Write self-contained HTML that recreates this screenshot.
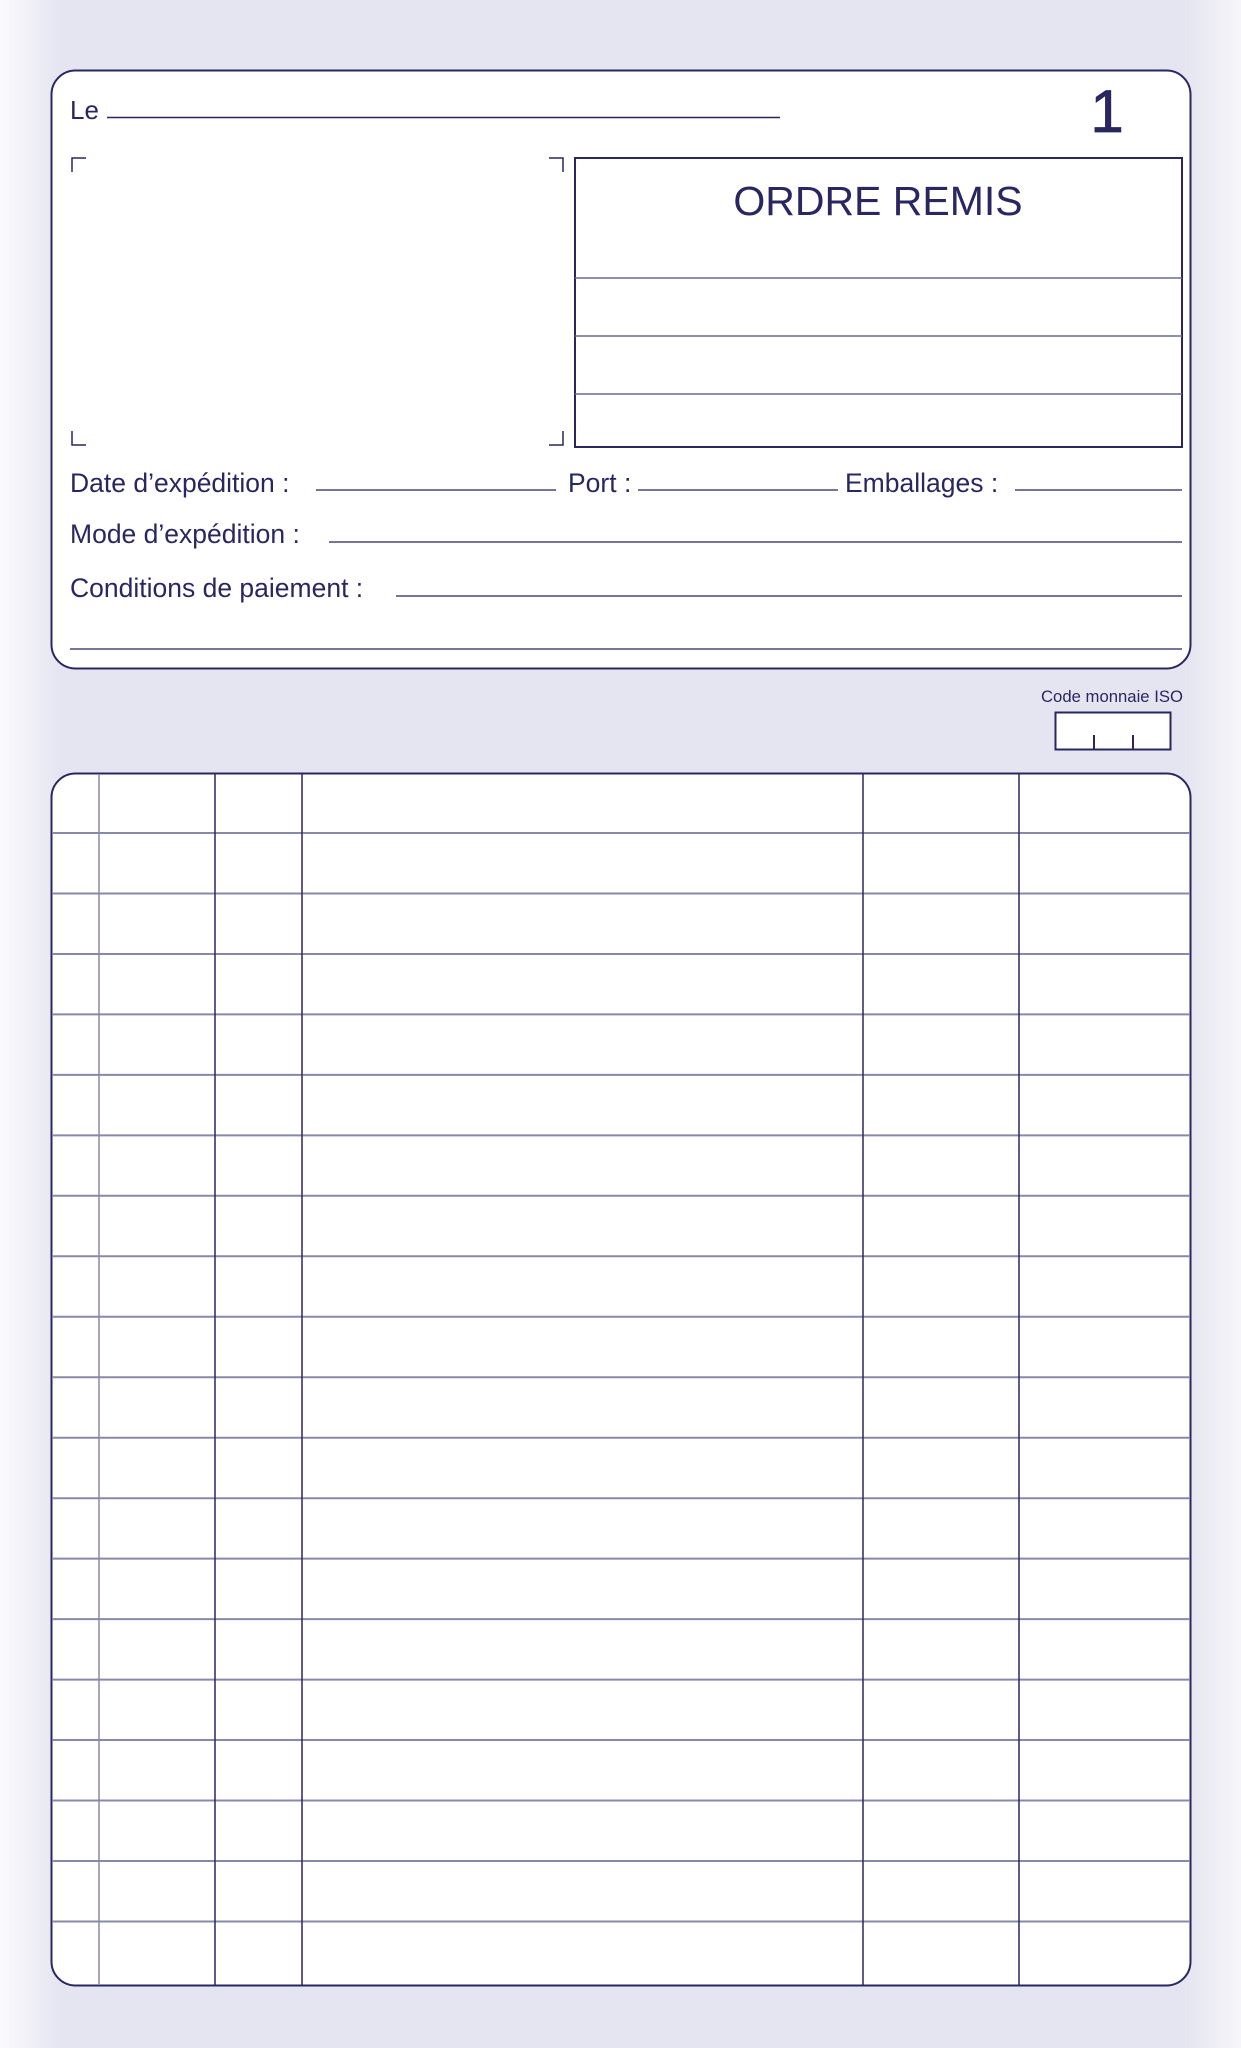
<!DOCTYPE html>
<html><head><meta charset="utf-8"><style>
html,body{margin:0;padding:0;}
body{width:1241px;height:2048px;overflow:hidden;background:#e5e5f1;}
svg{display:block;}
text{font-family:"Liberation Sans",sans-serif;fill:#2a2760;}
</style></head><body>
<svg width="1241" height="2048" viewBox="0 0 1241 2048" xmlns="http://www.w3.org/2000/svg">
<defs>
<linearGradient id="lg" x1="0" x2="1" y1="0" y2="0">
<stop offset="0" stop-color="#fbfbfd"/><stop offset="1" stop-color="#e5e5f1"/>
</linearGradient>
<linearGradient id="rg" x1="1" x2="0" y1="0" y2="0">
<stop offset="0" stop-color="#f6f6fa"/><stop offset="1" stop-color="#e5e5f1"/>
</linearGradient>
</defs>
<rect x="0" y="0" width="1241" height="2048" fill="#e5e5f1"/>
<rect x="0" y="0" width="60" height="2048" fill="url(#lg)"/>
<rect x="1185" y="0" width="56" height="2048" fill="url(#rg)"/>

<g stroke="#2a2760" fill="none">
<rect x="51.5" y="70.5" width="1139" height="598" rx="24" fill="#fff" stroke-width="2"/>
<line x1="107" y1="117.5" x2="780" y2="117.5" stroke-width="1.5"/>
<path d="M72 172 V158 H86" stroke-width="1.5"/>
<path d="M549 158 H563 V172" stroke-width="1.5"/>
<path d="M72 431 V445 H86" stroke-width="1.5"/>
<path d="M549 445 H563 V431" stroke-width="1.5"/>
<rect x="575" y="158" width="607" height="289" stroke-width="2"/>
<line x1="575" y1="278" x2="1182" y2="278" stroke-width="1.5" stroke="#6a6890"/>
<line x1="575" y1="336" x2="1182" y2="336" stroke-width="1.5" stroke="#6a6890"/>
<line x1="575" y1="394" x2="1182" y2="394" stroke-width="1.5" stroke="#6a6890"/>
<g stroke="#4a4878" stroke-width="1.5">
<line x1="316" y1="490" x2="556" y2="490"/>
<line x1="638" y1="490" x2="838" y2="490"/>
<line x1="1015" y1="490" x2="1182" y2="490"/>
<line x1="329" y1="542" x2="1182" y2="542"/>
<line x1="396" y1="596" x2="1182" y2="596"/>
<line x1="70" y1="649" x2="1182" y2="649"/>
</g>
<rect x="1055.5" y="712.5" width="115" height="37" fill="#fff" stroke-width="2"/>
<line x1="1094" y1="735" x2="1094" y2="750" stroke-width="2"/>
<line x1="1133" y1="735" x2="1133" y2="750" stroke-width="2"/>
<rect x="51.5" y="773.5" width="1139" height="1212" rx="24" fill="#fff" stroke-width="2"/>
<g stroke="#8a88a8" stroke-width="2">
<line x1="52" y1="833" x2="1190" y2="833"/>
<line x1="52" y1="893.5" x2="1190" y2="893.5"/>
<line x1="52" y1="954" x2="1190" y2="954"/>
<line x1="52" y1="1014.4" x2="1190" y2="1014.4"/>
<line x1="52" y1="1074.9" x2="1190" y2="1074.9"/>
<line x1="52" y1="1135.4" x2="1190" y2="1135.4"/>
<line x1="52" y1="1195.8" x2="1190" y2="1195.8"/>
<line x1="52" y1="1256.3" x2="1190" y2="1256.3"/>
<line x1="52" y1="1316.8" x2="1190" y2="1316.8"/>
<line x1="52" y1="1377.2" x2="1190" y2="1377.2"/>
<line x1="52" y1="1437.7" x2="1190" y2="1437.7"/>
<line x1="52" y1="1498.2" x2="1190" y2="1498.2"/>
<line x1="52" y1="1558.6" x2="1190" y2="1558.6"/>
<line x1="52" y1="1619.1" x2="1190" y2="1619.1"/>
<line x1="52" y1="1679.6" x2="1190" y2="1679.6"/>
<line x1="52" y1="1740" x2="1190" y2="1740"/>
<line x1="52" y1="1800.5" x2="1190" y2="1800.5"/>
<line x1="52" y1="1861" x2="1190" y2="1861"/>
<line x1="52" y1="1921.5" x2="1190" y2="1921.5"/>
</g>
<line x1="99" y1="774" x2="99" y2="1985" stroke="#8a88a8" stroke-width="1.5"/>
<line x1="215" y1="774" x2="215" y2="1985" stroke-width="1.5"/>
<line x1="302" y1="774" x2="302" y2="1985" stroke-width="1.5"/>
<line x1="863" y1="774" x2="863" y2="1985" stroke-width="1.5"/>
<line x1="1019" y1="774" x2="1019" y2="1985" stroke-width="1.5"/>
</g>

<text x="70" y="119" font-size="26">Le</text>
<text x="1107" y="132" font-size="60" text-anchor="middle" stroke="#2a2760" stroke-width="0.8">1</text>
<text x="878" y="215" font-size="41" text-anchor="middle">ORDRE REMIS</text>
<text x="70" y="492" font-size="26.5">Date d’expédition :</text>
<text x="568" y="492" font-size="26.5">Port :</text>
<text x="845" y="492" font-size="26.5">Emballages :</text>
<text x="70" y="543" font-size="26.5">Mode d’expédition :</text>
<text x="70" y="597" font-size="26.5">Conditions de paiement :</text>
<text x="1183" y="702" font-size="17" text-anchor="end" textLength="142" lengthAdjust="spacingAndGlyphs">Code monnaie ISO</text>
</svg>
</body></html>
